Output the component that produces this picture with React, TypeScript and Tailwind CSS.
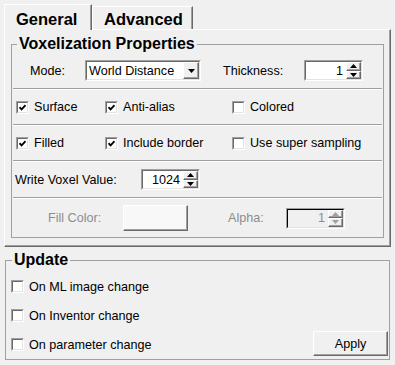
import React from 'react'

const raised =
  'border border-t-white border-l-white border-r-[#696969] border-b-[#696969] shadow-[inset_-1px_-1px_0_#a0a0a0]'
const sunken =
  'border border-t-[#a0a0a0] border-l-[#a0a0a0] border-r-white border-b-white'
const sunkenInner =
  'border border-t-[#696969] border-l-[#696969] border-r-[#e3e3e3] border-b-[#e3e3e3]'

function Tri({ up = false, color = '#000' }: { up?: boolean; color?: string }) {
  return (
    <svg width="7" height="4" viewBox="0 0 7 4">
      <path d={up ? 'M3.5 0 L7 4 L0 4 Z' : 'M0 0 L7 0 L3.5 4 Z'} fill={color} />
    </svg>
  )
}

function Check({ checked = false }: { checked?: boolean }) {
  return (
    <div className={`h-[13px] w-[13px] shrink-0 ${sunken}`}>
      <div className={`flex h-full w-full items-center justify-center bg-white ${sunkenInner}`}>
        {checked && (
          <svg width="7" height="7" viewBox="0 0 7 7">
            <path d="M0.5 3.2 L2.6 5.4 L6.5 1.2" stroke="#000" strokeWidth="1.8" fill="none" />
          </svg>
        )}
      </div>
    </div>
  )
}

function CheckItem({ label, checked, w }: { label: string; checked?: boolean; w?: string }) {
  return (
    <div className={`flex items-center gap-[5px] ${w ?? ''}`}>
      <Check checked={checked} />
      <span>{label}</span>
    </div>
  )
}

function Spin({ value, disabled = false, w }: { value: string; disabled?: boolean; w: string }) {
  return (
    <div className={`h-[21px] ${w} ${sunken}`}>
      <div
        className={`flex h-full ${
          disabled ? 'border border-t-black border-l-black border-r-[#e3e3e3] border-b-[#e3e3e3] bg-[#f0f0f0]' : `${sunkenInner} bg-white`
        }`}
      >
        <div className={`flex flex-1 items-center justify-end pr-[3px] ${disabled ? 'text-[#8d8d8d]' : ''}`}>
          {value}
        </div>
        <div className="flex w-[15px] flex-col">
          <div className={`flex flex-1 items-center justify-center bg-[#f0f0f0] ${raised}`}>
            <Tri up color={disabled ? '#a0a0a0' : '#000'} />
          </div>
          <div className={`flex flex-1 items-center justify-center bg-[#f0f0f0] ${raised}`}>
            <Tri color={disabled ? '#a0a0a0' : '#000'} />
          </div>
        </div>
      </div>
    </div>
  )
}

function Combo() {
  return (
    <div className={`h-[21px] w-[116px] ${sunken}`}>
      <div className={`flex h-full bg-white ${sunkenInner}`}>
        <div className="flex flex-1 items-center pl-[2px]">World Distance</div>
        <div className={`flex w-[16px] items-center justify-center bg-[#f0f0f0] ${raised}`}>
          <Tri />
        </div>
      </div>
    </div>
  )
}

function Sep() {
  return <div className="mx-[1px] h-[2px] border-t border-t-[#a0a0a0] border-b border-b-white" />
}

export default function App() {
  return (
    <div
      className="h-[365px] w-[395px] overflow-hidden bg-[#f0f0f0] pt-[4px] text-[12.6px] leading-[16px] text-black"
      style={{ fontFamily: '"Liberation Sans", Arial, sans-serif' }}
    >
      {/* tabs */}
      <div className="ml-[4px] w-[387px]">
        <div className="flex h-[25px] items-end text-[16.5px] font-bold">
          <div className="relative z-10 -mb-[1px] flex h-[26px] w-[88px] items-start border border-b-0 border-t-white border-l-white border-r-[#696969] bg-[#f0f0f0] pt-[6px] pl-[11px] shadow-[inset_-1px_0_0_#a0a0a0]">
            General
          </div>
          <div className="flex h-[23px] w-[101px] items-start border border-b-0 border-t-white border-l-white border-r-[#696969] pt-[4px] pl-[11px] shadow-[inset_-1px_0_0_#a0a0a0]">
            Advanced
          </div>
        </div>

        {/* pane */}
        <div className={`h-[218px] px-[6px] pt-[5px] ${raised}`}>
          <fieldset className="border border-[#a0a0a0]">
            <legend className="ml-[5px] px-[2px] text-[16px] font-bold leading-[18px]">
              Voxelization Properties
            </legend>
            <div className="flex h-[35px] items-center pl-[18px]">
              <span className="w-[55px]">Mode:</span>
              <Combo />
              <span className="ml-[22px] w-[81px]">Thickness:</span>
              <Spin value="1" w="w-[59px]" />
            </div>
            <Sep />
            <div className="flex h-[34px] items-center pl-[4px]">
              <CheckItem label="Surface" checked w="w-[89px]" />
              <CheckItem label="Anti-alias" checked w="w-[127px]" />
              <CheckItem label="Colored" />
            </div>
            <Sep />
            <div className="flex h-[34px] items-center pl-[4px]">
              <CheckItem label="Filled" checked w="w-[89px]" />
              <CheckItem label="Include border" checked w="w-[127px]" />
              <CheckItem label="Use super sampling" />
            </div>
            <Sep />
            <div className="flex h-[35px] items-center pl-[3px]">
              <span className="w-[126px]">Write Voxel Value:</span>
              <Spin value="1024" w="w-[59px]" />
            </div>
            <Sep />
            <div className="flex h-[38px] items-center pl-[36px] text-[#8d8d8d]">
              <span className="w-[75px]">Fill Color:</span>
              <div className={`h-[26px] w-[65px] bg-[#f8f8f8] ${raised}`} />
              <span className="ml-[40px] w-[58px]">Alpha:</span>
              <Spin value="1" disabled w="w-[59px]" />
            </div>
          </fieldset>
        </div>
      </div>

      {/* update group */}
      <fieldset className="ml-[5px] mt-[4px] w-[385px] border border-[#a0a0a0]">
        <legend className="ml-[6px] px-[2px] text-[16px] font-bold leading-[18px]">Update</legend>
        <div className="flex pt-[3px]">
          <div className="flex flex-1 flex-col pl-[5px]">
            <div className="flex h-[29px] items-center">
              <CheckItem label="On ML image change" />
            </div>
            <div className="flex h-[29px] items-center">
              <CheckItem label="On Inventor change" />
            </div>
            <div className="flex h-[29px] items-center">
              <CheckItem label="On parameter change" />
            </div>
          </div>
          <button
            className={`mb-[3px] mr-[1px] flex h-[25px] w-[75px] items-center justify-center self-end bg-[#f0f0f0] ${raised}`}
          >
            Apply
          </button>
        </div>
      </fieldset>
    </div>
  )
}
